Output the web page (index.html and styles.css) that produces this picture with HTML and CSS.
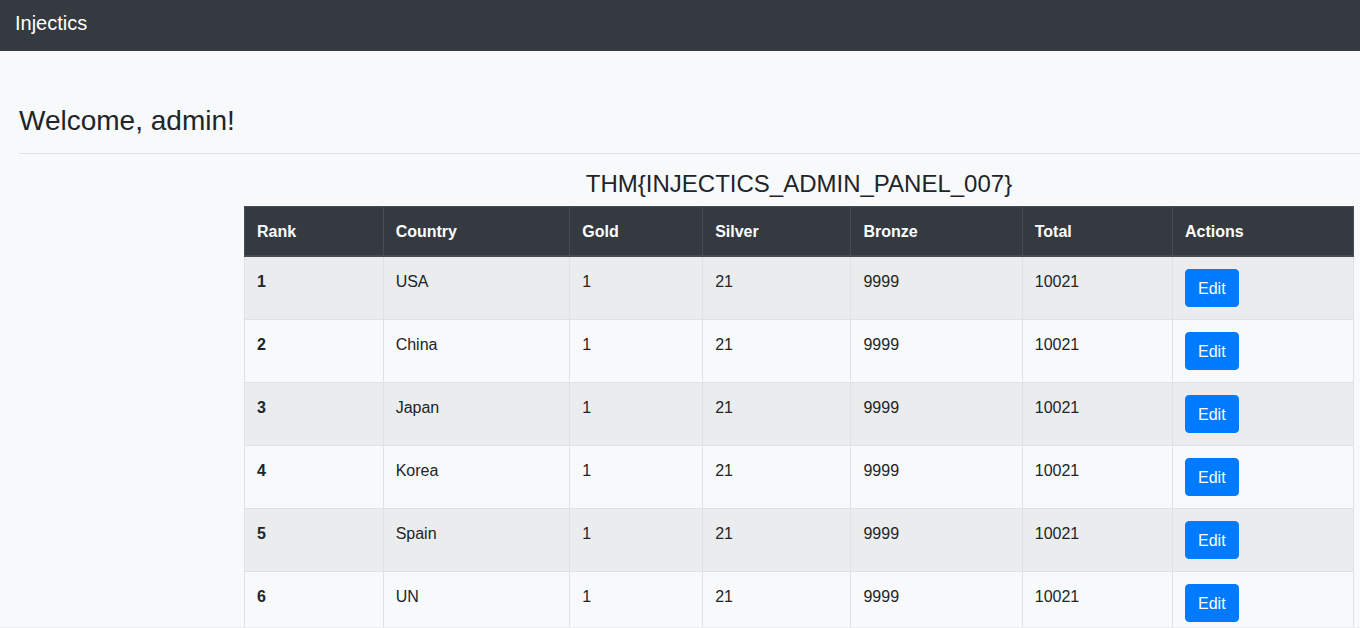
FILE: index.html
```html
<!DOCTYPE html>
<html lang="en">
<head>
<meta charset="utf-8">
<title>Injectics</title>
<meta name="viewport" content="width=device-width, initial-scale=1">
<link rel="stylesheet" href="styles.css">
</head>
<body>
<nav class="navbar"><a class="navbar-brand" href="#">Injectics</a></nav>
<main class="main">
  <header class="page-header"><h1 class="page-title">Welcome, admin!</h1></header>
  <section class="leaderboard">
    <h2 class="board-title">THM{INJECTICS_ADMIN_PANEL_007}</h2>
    <table class="table">
      <thead>
        <tr><th scope="col">Rank</th><th scope="col">Country</th><th scope="col">Gold</th><th scope="col">Silver</th><th scope="col">Bronze</th><th scope="col">Total</th><th scope="col">Actions</th></tr>
      </thead>
      <tbody>
        <tr><th scope="row">1</th><td>USA</td><td>1</td><td>21</td><td>9999</td><td>10021</td><td class="actions"><button class="btn" type="button">Edit</button></td></tr>
        <tr><th scope="row">2</th><td>China</td><td>1</td><td>21</td><td>9999</td><td>10021</td><td class="actions"><button class="btn" type="button">Edit</button></td></tr>
        <tr><th scope="row">3</th><td>Japan</td><td>1</td><td>21</td><td>9999</td><td>10021</td><td class="actions"><button class="btn" type="button">Edit</button></td></tr>
        <tr><th scope="row">4</th><td>Korea</td><td>1</td><td>21</td><td>9999</td><td>10021</td><td class="actions"><button class="btn" type="button">Edit</button></td></tr>
        <tr><th scope="row">5</th><td>Spain</td><td>1</td><td>21</td><td>9999</td><td>10021</td><td class="actions"><button class="btn" type="button">Edit</button></td></tr>
        <tr><th scope="row">6</th><td>UN</td><td>1</td><td>21</td><td>9999</td><td>10021</td><td class="actions"><button class="btn" type="button">Edit</button></td></tr>
      </tbody>
    </table>
  </section>
</main>
</body>
</html>
```
FILE: styles.css
```css
* { box-sizing: border-box; }

body {
  display: flex;
  flex-direction: column;
  height: 100vh;
  margin: 0;
  border-bottom: 1px solid #eff0f2;
  background: #f8f9fb;
  color: #212529;
  font: 16px/24px "Liberation Sans", Arial, sans-serif;
}

.navbar {
  flex: none;
  padding: 8px 15px 13px;
  background: #343a40;
}

.navbar-brand {
  display: inline-block;
  color: #fff;
  font-size: 20px;
  line-height: 30px;
  text-decoration: none;
  vertical-align: top;
}

.main {
  flex: 1;
  min-height: 0;
  overflow: auto;
  scrollbar-width: none;
  padding: 53px 0 0 19px;
}

.page-header {
  padding-bottom: 15px;
  border-bottom: 1px solid #dee2e6;
}

.page-title {
  margin: 0;
  font-size: 28px;
  font-weight: 400;
  line-height: 34px;
}

.leaderboard {
  margin: 15px 6px 0 225px;
}

.board-title {
  margin: 0 0 8px;
  font-size: 24px;
  font-weight: 400;
  line-height: 29px;
  text-align: center;
}

.table {
  width: 100%;
  border: 1px solid #dee2e6;
  border-collapse: collapse;
}

.table th,
.table td {
  padding: 13px 12px 11px;
  border: 1px solid #dee2e6;
  text-align: left;
  vertical-align: top;
}

.table thead th {
  border-color: #454d55;
  border-bottom-width: 2px;
  background: #343a40;
  color: #fff;
  vertical-align: bottom;
}

.table tbody tr:nth-child(odd) {
  background: rgba(0, 0, 0, 0.05);
}

.table .actions {
  padding: 12px;
}

.btn {
  display: inline-block;
  padding: 7px 12px 5px;
  border: 1px solid #007bff;
  border-radius: 4px;
  background: #007bff;
  color: #fff;
  font: inherit;
  vertical-align: middle;
  cursor: pointer;
}
```
